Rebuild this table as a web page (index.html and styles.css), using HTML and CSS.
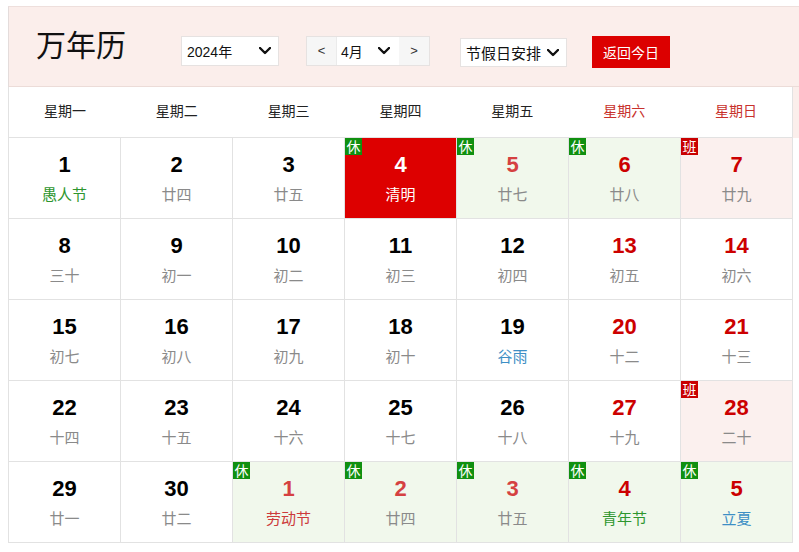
FILE: index.html
```html
<!DOCTYPE html>
<html lang="zh-CN">
<head>
<meta charset="utf-8">
<title>万年历</title>
<link rel="stylesheet" href="styles.css">
</head>
<body>
<div class="cal">
  <div class="top">
    <div class="head">
      <h1 class="title">万年历</h1>
      <div class="sel sel-year"><span>2024年</span><svg class="chev" viewBox="0 0 12 8" width="12" height="8"><polyline points="1,1 6,6 11,1"/></svg></div>
      <div class="month">
        <span class="nav">&lt;</span>
        <div class="sel sel-month"><span>4月</span><svg class="chev" viewBox="0 0 12 8" width="12" height="8"><polyline points="1,1 6,6 11,1"/></svg></div>
        <span class="nav">&gt;</span>
      </div>
      <div class="sel sel-hol"><span>节假日安排</span><svg class="chev" viewBox="0 0 12 8" width="12" height="8"><polyline points="1,1 6,6 11,1"/></svg></div>
      <button class="today-btn">返回今日</button>
    </div>
    <div class="weeks">
      <div>星期一</div><div>星期二</div><div>星期三</div><div>星期四</div><div>星期五</div><div class="we">星期六</div><div class="we">星期日</div>
    </div>
  </div>
  <div class="grid">
    <div class="cell"><b class="num">1</b><span class="lun fest">愚人节</span></div>
    <div class="cell"><b class="num">2</b><span class="lun">廿四</span></div>
    <div class="cell"><b class="num">3</b><span class="lun">廿五</span></div>
    <div class="cell today"><i class="badge rest">休</i><b class="num">4</b><span class="lun">清明</span></div>
    <div class="cell hol"><i class="badge rest">休</i><b class="num hnum">5</b><span class="lun">廿七</span></div>
    <div class="cell hol"><i class="badge rest">休</i><b class="num red">6</b><span class="lun">廿八</span></div>
    <div class="cell work"><i class="badge ban">班</i><b class="num red">7</b><span class="lun">廿九</span></div>

    <div class="cell"><b class="num">8</b><span class="lun">三十</span></div>
    <div class="cell"><b class="num">9</b><span class="lun">初一</span></div>
    <div class="cell"><b class="num">10</b><span class="lun">初二</span></div>
    <div class="cell"><b class="num">11</b><span class="lun">初三</span></div>
    <div class="cell"><b class="num">12</b><span class="lun">初四</span></div>
    <div class="cell"><b class="num red">13</b><span class="lun">初五</span></div>
    <div class="cell"><b class="num red">14</b><span class="lun">初六</span></div>

    <div class="cell"><b class="num">15</b><span class="lun">初七</span></div>
    <div class="cell"><b class="num">16</b><span class="lun">初八</span></div>
    <div class="cell"><b class="num">17</b><span class="lun">初九</span></div>
    <div class="cell"><b class="num">18</b><span class="lun">初十</span></div>
    <div class="cell"><b class="num">19</b><span class="lun term">谷雨</span></div>
    <div class="cell"><b class="num red">20</b><span class="lun">十二</span></div>
    <div class="cell"><b class="num red">21</b><span class="lun">十三</span></div>

    <div class="cell"><b class="num">22</b><span class="lun">十四</span></div>
    <div class="cell"><b class="num">23</b><span class="lun">十五</span></div>
    <div class="cell"><b class="num">24</b><span class="lun">十六</span></div>
    <div class="cell"><b class="num">25</b><span class="lun">十七</span></div>
    <div class="cell"><b class="num">26</b><span class="lun">十八</span></div>
    <div class="cell"><b class="num red">27</b><span class="lun">十九</span></div>
    <div class="cell work"><i class="badge ban">班</i><b class="num red">28</b><span class="lun">二十</span></div>

    <div class="cell"><b class="num">29</b><span class="lun">廿一</span></div>
    <div class="cell"><b class="num">30</b><span class="lun">廿二</span></div>
    <div class="cell hol"><i class="badge rest">休</i><b class="num hnum">1</b><span class="lun labor">劳动节</span></div>
    <div class="cell hol"><i class="badge rest">休</i><b class="num hnum">2</b><span class="lun">廿四</span></div>
    <div class="cell hol"><i class="badge rest">休</i><b class="num hnum">3</b><span class="lun">廿五</span></div>
    <div class="cell hol"><i class="badge rest">休</i><b class="num red">4</b><span class="lun fest">青年节</span></div>
    <div class="cell hol"><i class="badge rest">休</i><b class="num red">5</b><span class="lun term">立夏</span></div>
  </div>
</div>
</body>
</html>
```
FILE: styles.css
```css
* { box-sizing: border-box; }
html, body { margin: 0; padding: 0; background: #fff; overflow: hidden; }
body {
  font-family: "Liberation Sans", "Noto Sans CJK SC", sans-serif;
  color: #000;
}
.cal {
  margin: 6px 0 0 8px;
  width: 785px;
}
.top {
  width: 800px;
  background: #fbeeeb;
  border-top: 1px solid #eedfdc;
  border-left: 1px solid #e4dcdb;
}
.head {
  height: 80px;
  border-bottom: 1px solid #ecdcd8;
  display: flex;
  align-items: flex-start;
}
.title {
  margin: 22px 0 0 27px;
  font-size: 30px;
  line-height: 34px;
  font-weight: normal;
  color: #111;
  width: 145px;
}
.sel {
  background: #fff;
  border: 1px solid #e6e2e1;
  height: 30px;
  display: flex;
  align-items: center;
  justify-content: space-between;
  font-size: 14px;
  color: #111;
}
.chev { fill: none; stroke: #111; stroke-width: 2.4; stroke-linecap: round; stroke-linejoin: round; }
.sel-year {
  margin-top: 29px;
  width: 98px;
  padding: 0 7px 0 5px;
}
.month {
  margin: 29px 0 0 27px;
  display: flex;
  height: 30px;
  border: 1px solid #e6e2e1;
  background: #f6f6f6;
}
.month .nav {
  width: 30px;
  text-align: center;
  font-size: 13px;
  line-height: 27px;
  color: #333;
}
.month .nav:first-child { border-right: 1px solid #ebebeb; }
.sel-month {
  border: none;
  height: 28px;
  width: 62px;
  padding: 0 9px 0 4px;
}
.sel-hol {
  margin: 31px 0 0 30px;
  width: 107px;
  height: 29px;
  font-size: 15px;
  padding: 0 7px 0 5px;
}
.today-btn {
  margin: 29px 0 0 25px;
  width: 78px;
  height: 32px;
  border: none;
  background: #dc0000;
  color: #fff;
  font-family: "Noto Sans CJK SC", sans-serif;
  font-size: 14px;
  padding: 0;
}
.weeks {
  width: 785px;
  height: 51px;
  background: #fff;
  border-right: 1px solid #e2e2e2;
  border-bottom: 1px solid #e2e2e2;
  margin-left: -1px;
  border-left: 1px solid #e2e2e2;
  display: grid;
  grid-template-columns: repeat(7, 1fr);
  align-items: center;
  font-size: 14px;
  color: #222;
  text-align: center;
}
.weeks > div { padding-bottom: 5px; }
.weeks .we { color: #c8312c; }
.grid {
  width: 785px;
  display: grid;
  grid-template-columns: repeat(7, 112px);
  border-left: 1px solid #e2e2e2;
}
.cell {
  position: relative;
  height: 81px;
  border-right: 1px solid #e2e2e2;
  border-bottom: 1px solid #e2e2e2;
  display: flex;
  flex-direction: column;
  align-items: center;
  padding-top: 14px;
}
.num {
  font-size: 22px;
  line-height: 26px;
  font-weight: bold;
  color: #000;
}
.num.red { color: #cc0000; }
.num.hnum { color: #d54141; }
.lun {
  margin-top: 5px;
  font-family: "Noto Sans CJK SC", sans-serif;
  font-size: 15px;
  line-height: 22px;
  color: #8a8a8a;
}
.lun.fest { color: #2e962e; }
.lun.term { color: #3d8fc5; }
.lun.labor { color: #cc3b3b; }
.hol { background: #f1f8ec; }
.work { background: #fbf0ee; }
.today { background: #dd0000; }
.today .num, .today .lun { color: #fff; }
.badge {
  position: absolute;
  left: 0;
  top: 0;
  width: 17px;
  height: 17px;
  font-style: normal;
  font-family: "Noto Sans CJK SC", sans-serif;
  font-size: 14px;
  line-height: 17px;
  text-align: center;
  color: #fff;
}
.badge.rest { background: #109010; }
.badge.ban { background: #c90000; }
```
